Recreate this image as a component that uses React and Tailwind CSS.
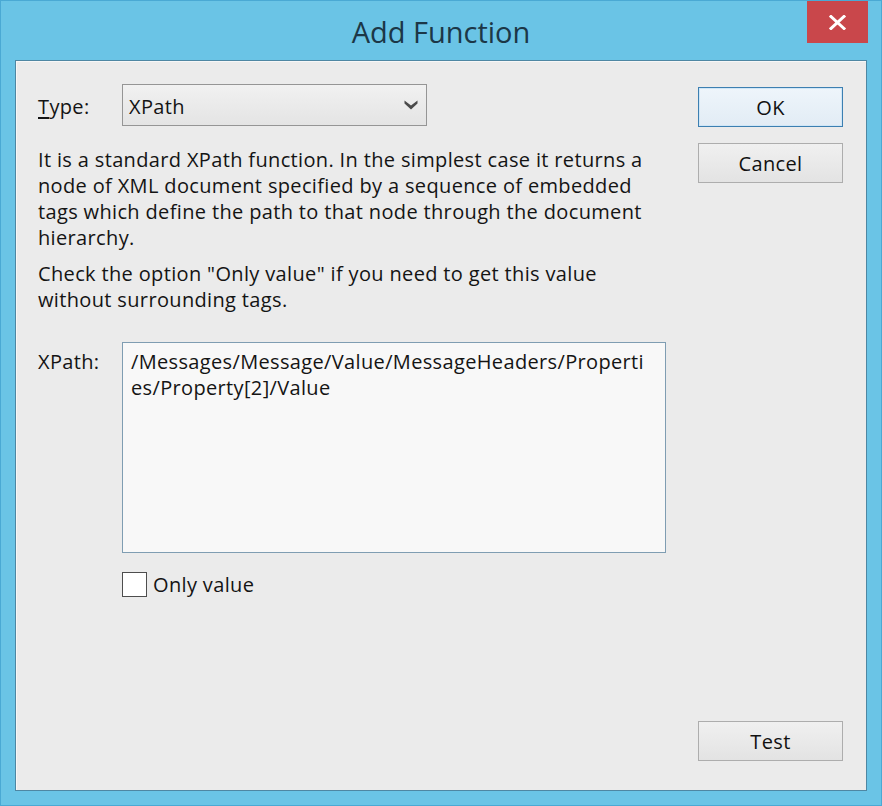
import React from 'react';

const font = { fontFamily: "'Open Sans', 'Noto Sans', sans-serif" };

function Button({ children, primary, className = '' }) {
  return (
    <button
      className={
        'h-[40px] w-[145px] border pt-[2px] text-[20px] tracking-[0.35px] text-[#111] ' +
        (primary
          ? 'border-[#3c7fb1] bg-linear-to-b from-[#eef5fb] to-[#e2ecf5] shadow-[inset_0_0_0_1px_#cfe6f7] '
          : 'border-[#adadad] bg-linear-to-b from-[#f0f0f0] to-[#e3e3e3] ') +
        className
      }
    >
      {children}
    </button>
  );
}

export default function App() {
  return (
    <div
      className="relative flex h-[806px] w-[882px] flex-col border border-[#4aa9d4] bg-[#6ac4e6] px-[14px] pb-[14px]"
      style={font}
    >
      {/* title bar */}
      <div className="flex h-[59px] shrink-0 items-center justify-center pt-[3px]">
        <h1 className="text-[29px] text-[#1c3747]">Add Function</h1>
      </div>
      <button className="absolute right-[13px] top-0 flex h-[42px] w-[61px] items-center justify-center bg-[#c9474b]">
        <svg width="17" height="15" viewBox="0 0 17 15">
          <path d="M2 1.5 L15 13.5 M15 1.5 L2 13.5" stroke="#fff" strokeWidth="3" strokeLinecap="square" />
        </svg>
      </button>

      {/* client area */}
      <div className="flex flex-1 border border-[#4e87a3] bg-[#ebebeb] shadow-[inset_1px_1px_0_#f7f7f7]">
        <div className="flex-1 pl-[22px] pt-[23px] text-[20px] leading-[26px] tracking-[0.35px] text-[#141414]">
          <div className="flex items-center">
            <span className="w-[84px] pt-[4px]">
              <span className="underline underline-offset-[3px]">T</span>ype:
            </span>
            <div className="flex h-[42px] w-[305px] items-center justify-between border border-[#959595] bg-linear-to-b from-[#f1f1f1] to-[#e4e4e4] pl-[6px] pr-[8px]">
              <span className="pt-[3px]">XPath</span>
              <svg width="14" height="10" viewBox="0 0 14 10">
                <path d="M0.5 0.5 L7 5.5 L13.5 0.5 L13.5 3.5 L7 9.5 L0.5 3.5 Z" fill="#4a4a4a" />
              </svg>
            </div>
          </div>

          <p className="mt-[21px] whitespace-nowrap">
            It is a standard XPath function. In the simplest case it returns a<br />
            node of XML document specified by a sequence of embedded<br />
            tags which define the path to that node through the document<br />
            hierarchy.
          </p>
          <p className="mt-[10px] whitespace-nowrap">
            Check the option "Only value" if you need to get this value<br />
            without surrounding tags.
          </p>

          <div className="mt-[29px] flex items-start">
            <span className="w-[84px] pt-[7px]">XPath:</span>
            <div className="h-[211px] w-[544px] border border-[#7f9db2] bg-[#f8f8f8] pl-[8px] pt-[6px] whitespace-nowrap">
              /Messages/Message/Value/MessageHeaders/Properti<br />
              es/Property[2]/Value
            </div>
          </div>

          <label className="ml-[84px] mt-[17px] flex items-center gap-[6px]">
            <span className="h-[25px] w-[25px] border border-[#4d4d4d] bg-white" />
            <span className="pt-[2px]">Only value</span>
          </label>
        </div>

        <div className="mr-[23px] flex w-[145px] flex-col pb-[29px] pt-[26px]">
          <Button primary>OK</Button>
          <Button className="mt-[16px]">Cancel</Button>
          <Button className="mt-auto">Test</Button>
        </div>
      </div>
    </div>
  );
}
